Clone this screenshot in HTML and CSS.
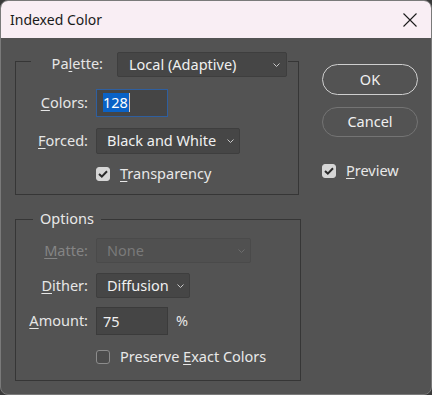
FILE: index.html
```html
<!DOCTYPE html>
<html>
<head>
<meta charset="utf-8">
<link rel="stylesheet" href="styles.css">
</head>
<body>
<div class="window">
  <div class="titlebar">
    <span class="title">Indexed Color</span>
    <svg class="close" width="14" height="14" viewBox="0 0 14 14"><path d="M0.5 0.5 L13.5 13.5 M13.5 0.5 L0.5 13.5" stroke="#1c1c1c" stroke-width="1.1" fill="none"/></svg>
  </div>
  <div class="content">
    <div class="left">
      <div class="group g1">
        <div class="head">
          <span class="label head-label">Pa<u>l</u>ette:</span>
          <div class="select w-palette"><span>Local (Adaptive)</span><svg class="chev" width="7" height="4" viewBox="0 0 7 4"><path d="M0.5 0.5 L3.5 3.5 L6.5 0.5" stroke="#c8c8c8" fill="none"/></svg></div>
        </div>
        <div class="row r-colors">
          <span class="label"><u>C</u>olors:</span>
          <div class="input focus"><span class="sel">128</span><span class="caret"></span></div>
        </div>
        <div class="row r-forced">
          <span class="label"><u>F</u>orced:</span>
          <div class="select w-forced"><span>Black and White</span><svg class="chev" width="7" height="4" viewBox="0 0 7 4"><path d="M0.5 0.5 L3.5 3.5 L6.5 0.5" stroke="#c8c8c8" fill="none"/></svg></div>
        </div>
        <div class="row r-check">
          <span class="label"></span>
          <div class="check"><span class="box on"><svg width="10" height="8" viewBox="0 0 10 8"><path d="M1 4 L3.8 6.6 L9 1.2" stroke="#2b2b2b" stroke-width="2" fill="none"/></svg></span><span class="ctext"><u>T</u>ransparency</span></div>
        </div>
      </div>
      <div class="group g2">
        <div class="legend">Options</div>
        <div class="row r-matte">
          <span class="label disabled"><u>M</u>atte:</span>
          <div class="select w-matte disabled"><span>None</span><svg class="chev" width="7" height="4" viewBox="0 0 7 4"><path d="M0.5 0.5 L3.5 3.5 L6.5 0.5" stroke="#6c6c6c" fill="none"/></svg></div>
        </div>
        <div class="row r-dither">
          <span class="label"><u>D</u>ither:</span>
          <div class="select w-dither"><span>Diffusion</span><svg class="chev" width="7" height="4" viewBox="0 0 7 4"><path d="M0.5 0.5 L3.5 3.5 L6.5 0.5" stroke="#c8c8c8" fill="none"/></svg></div>
        </div>
        <div class="row r-amount">
          <span class="label"><u>A</u>mount:</span>
          <div class="input"><span>75</span></div>
          <span class="pct">%</span>
        </div>
        <div class="row r-check2">
          <span class="label"></span>
          <div class="check"><span class="box"></span><span class="ctext">Preserve <u>E</u>xact Colors</span></div>
        </div>
      </div>
    </div>
    <div class="right">
      <div class="btn ok">OK</div>
      <div class="btn cancel">Cancel</div>
      <div class="check preview"><span class="box on"><svg width="10" height="8" viewBox="0 0 10 8"><path d="M1 4 L3.8 6.6 L9 1.2" stroke="#2b2b2b" stroke-width="2" fill="none"/></svg></span><span class="ctext"><u>P</u>review</span></div>
    </div>
  </div>
</div>
</body>
</html>
```
FILE: styles.css
```css
* { box-sizing: border-box; }
html, body { margin: 0; padding: 0; }
body {
  background: #3a3a3a;
  font-family: "Noto Sans", "Open Sans", sans-serif;
  font-size: 14.5px;
  color: #e8e8e8;
}
.window {
  width: 432px;
  height: 395px;
  background: #535353;
  border: 1px solid #7a7a7a;
  border-radius: 8px;
  overflow: hidden;
}
.titlebar {
  height: 37px;
  background: #f9eef4;
  display: flex;
  align-items: center;
  justify-content: space-between;
  padding: 0 14px 0 9px;
}
.title {
  color: #1a1a1a;
  font-size: 14px;
}
.close { display: block; margin-top: 1px; }
.content {
  display: flex;
  padding-left: 14px;
}
.left {
  width: 286px;
  display: flex;
  flex-direction: column;
}
.group {
  border: 1px solid #363636;
}
.g1 {
  width: 284px;
  margin-top: 23px;
  padding-bottom: 9px;
}
.g2 {
  width: 286px;
  margin-top: 24px;
  padding-bottom: 12px;
}
.head {
  display: flex;
  align-items: center;
  width: fit-content;
  margin: -10px 0 0 15px;
  padding-right: 1px;
  background: #535353;
  gap: 14px;
}
.head-label { width: 73px; padding-bottom: 3px; }
.legend {
  width: fit-content;
  height: 20px;
  line-height: 18px;
  margin: -11px 0 0 17px;
  padding: 0 7px;
  background: #535353;
}
.row {
  display: flex;
  align-items: center;
  gap: 8px;
  padding-bottom: 2px;
}
.label {
  width: 72px;
  text-align: right;
  flex: none;
  color: #e6e6e6;
}
.label.disabled { color: #858585; }
u { text-decoration-thickness: 1px; text-underline-offset: 2px; }
.r-colors { margin-top: 12px; height: 28px; }
.r-forced { margin-top: 11px; height: 26px; }
.r-check { margin-top: 10px; height: 21px; }
.r-matte { margin-top: 9px; height: 25px; }
.r-dither { margin-top: 10px; height: 25px; }
.r-amount { margin-top: 9px; height: 28px; }
.r-check2 { margin-top: 12px; height: 21px; }

.row > .select, .row > .input { height: calc(100% + 2px); align-self: flex-start; }
.select {
  height: 100%;
  display: flex;
  align-items: center;
  justify-content: space-between;
  background: #464646;
  border: 1px solid #3e3e3e;
  border-radius: 2px;
  padding: 0 5px 2px 10px;
  color: #f0f0f0;
}
.select .chev { display: block; flex: none; margin-top: 2px; }
.w-palette { width: 170px; height: 25px; padding-left: 11px; padding-right: 6px; }
.w-forced { width: 144px; }
.w-matte { width: 155px; }
.w-dither { width: 94px; }
.select.disabled {
  background: #505050;
  border-color: #4a4a4a;
  color: #7a7a7a;
}
.input {
  width: 72px;
  height: 100%;
  background: #454545;
  border: 1px solid #3b3b3b;
  display: flex;
  align-items: center;
  padding: 0 0 1px 6px;
  color: #f0f0f0;
}
.input.focus { border-color: #2f5f9f; }
.sel {
  background: #0a62c6;
  color: #ffffff;
  line-height: 19px;
  padding: 0 1px 0 0;
}
.caret {
  width: 1px;
  height: 19px;
  background: #e0c8b8;
}
.pct { margin-left: 0px; color: #e6e6e6; }

.check {
  display: flex;
  align-items: center;
  gap: 10px;
}
.box {
  width: 14px;
  height: 14px;
  border-radius: 3px;
  border: 1px solid #8c8c8c;
  background: #4c4c4c;
  display: flex;
  align-items: center;
  justify-content: center;
  flex: none;
}
.box.on {
  background: #d6d6d6;
  border-color: #d6d6d6;
}
.box svg { display: block; }
.ctext { color: #e8e8e8; padding-bottom: 2px; }

.right {
  margin-left: 21px;
  padding-top: 26px;
  display: flex;
  flex-direction: column;
  width: 96px;
}
.btn {
  width: 96px;
  height: 31px;
  border-radius: 16px;
  display: flex;
  align-items: center;
  justify-content: center;
  padding-bottom: 2px;
  color: #f0f0f0;
}
.ok { border: 1.5px solid #cfcfcf; }
.cancel { border: 1px solid #747474; margin-top: 12px; height: 30px; }
.preview { margin-top: 23px; height: 21px; }
```
